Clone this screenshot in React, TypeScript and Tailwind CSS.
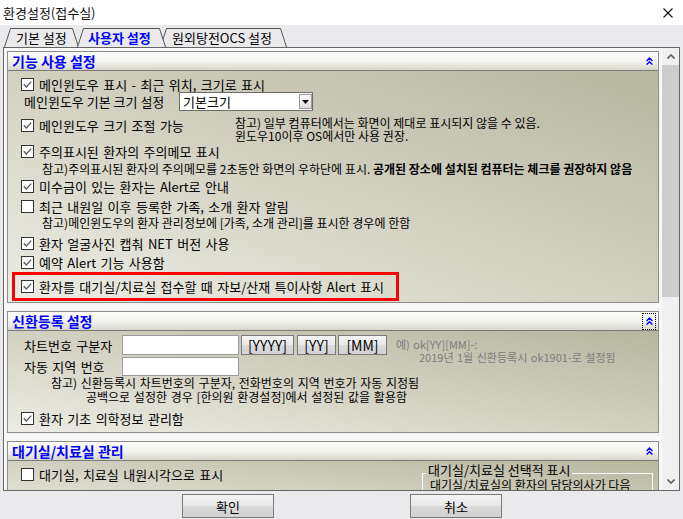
import React from "react";

function Check({ checked = true }: { checked?: boolean }) {
  return (
    <svg width="13" height="13" viewBox="0 0 13 13" className="shrink-0">
      <rect x="0.5" y="0.5" width="12" height="12" fill="#fff" stroke="#333" />
      {checked && (
        <path d="M2.8 6.3L5.3 9L10.2 3.6" fill="none" stroke="#5a5a5a" strokeWidth="1.3" />
      )}
    </svg>
  );
}

function Chev() {
  return (
    <svg width="7" height="8" viewBox="0 0 7 8">
      <path d="M0.6 4L3.5 1.1L6.4 4M0.6 7.6L3.5 4.7L6.4 7.6" fill="none" stroke="#0000ff" strokeWidth="1.4" />
    </svg>
  );
}

function Section({
  title,
  focus,
  bodyClass,
  children,
}: {
  title: string;
  focus?: boolean;
  bodyClass: string;
  children: React.ReactNode;
}) {
  return (
    <div className="w-[652px] shrink-0 border border-[#8c8c8c]">
      <div className="h-[19px] border-b border-[#7a7a7a] bg-[linear-gradient(to_bottom,#fcfcfa,#f2f2ed_55%,#d6d6ca)] flex items-center justify-between pl-[4px] pr-[2px]">
        <span className="text-[14px] font-bold text-[#0000ff] leading-none">{title}</span>
        <div
          className={
            focus
              ? "w-[14px] h-[17px] flex items-center justify-center border border-dotted border-black"
              : "w-[14px] h-[17px] flex items-center justify-center"
          }
        >
          <Chev />
        </div>
      </div>
      <div className={"bg-[linear-gradient(to_bottom_left,#b7b69e,#d2d1c1_50%,#ecece5)] " + bodyClass}>
        {children}
      </div>
    </div>
  );
}

function Row({ checked = true, children, cls = "" }: { checked?: boolean; children: React.ReactNode; cls?: string }) {
  return (
    <div className={"h-[16px] flex items-center pl-[13px] gap-[5px] " + cls}>
      <Check checked={checked} />
      <span className="leading-none whitespace-nowrap [word-spacing:1.5px]">{children}</span>
    </div>
  );
}

function Tab({
  w,
  cls,
  label,
  selected,
  pl,
}: {
  w: number;
  cls: string;
  label: string;
  selected?: boolean;
  pl: string;
}) {
  return (
    <div className={"relative h-[19px] shrink-0 " + cls}>
      <svg width={w} height="19" viewBox={`0 0 ${w} 19`} className="absolute left-0 top-0">
        <path
          d={`M0.5 19L6.5 0.5L${w - 6.5} 0.5L${w - 0.5} 19`}
          fill="#eaeaec"
          stroke="#555"
          strokeWidth="1"
        />
      </svg>
      <div
        className={
          "relative h-full flex items-center leading-none whitespace-nowrap text-[13px] " +
          pl +
          (selected ? " font-bold text-[#0000ff]" : " text-black")
        }
      >
        {label}
      </div>
    </div>
  );
}

function Btn({ children, cls }: { children: React.ReactNode; cls: string }) {
  return (
    <div
      className={
        "border border-[#7a7a7a] bg-[linear-gradient(to_bottom,#f4f4f4,#e8e8e8_50%,#dadada_52%,#d2d2d2)] flex items-center justify-center leading-none " +
        cls
      }
    >
      {children}
    </div>
  );
}

export default function App() {
  return (
    <div className="w-[683px] h-[519px] bg-[#eaeaec] flex flex-col overflow-hidden text-[13px] text-black font-['Noto_Sans_CJK_KR',sans-serif]">
      {/* title bar */}
      <div className="h-[25px] shrink-0 bg-white flex items-center justify-between pl-[3px] pr-[10px]">
        <span className="leading-none text-[13px] text-[#111]">환경설정(접수실)</span>
        <svg width="10" height="10" viewBox="0 0 10 10">
          <path d="M0.5 0.5L9.5 9.5M9.5 0.5L0.5 9.5" stroke="#111" strokeWidth="1.1" />
        </svg>
      </div>

      {/* tabs */}
      <div className="h-[22px] shrink-0 pt-[3px] pl-[4px] flex">
        <Tab w={75} cls="w-[75px] z-[1]" label="기본 설정" pl="pl-[12px]" />
        <Tab w={89} cls="w-[89px] ml-[-2px] z-[3]" label="사용자 설정" pl="pl-[11px]" selected />
        <Tab w={127} cls="w-[127px] ml-[-6px] z-[2]" label="원외탕전OCS 설정" pl="pl-[12px]" />
      </div>

      {/* frame */}
      <div className="mx-[3px] h-[444px] shrink-0 border border-[#666] flex">
        <div className="w-[659px] h-full overflow-hidden bg-[#f7f7f7] pl-[3px] pt-[3px] flex flex-col">
          {/* Section 1 */}
          <Section title="기능 사용 설정" bodyClass="h-[231px] flex flex-col pt-[5px]">
            <Row>메인윈도우 표시 - 최근 위치, 크기로 표시</Row>
            <div className="h-[19px] flex items-center pl-[16px]">
              <span className="w-[155px] leading-none whitespace-nowrap">메인윈도우 기본 크기 설정</span>
              <div className="w-[134px] h-[19px] bg-white border border-[#6d6d6d] flex items-center justify-between pl-[3px]">
                <span className="leading-none">기본크기</span>
                <div className="w-[13px] h-[15px] border border-[#9a9a9a] bg-[linear-gradient(to_bottom,#fafafa,#dcdcdc)] flex items-center justify-center">
                  <svg width="7" height="4" viewBox="0 0 7 4">
                    <path d="M0 0H7L3.5 4Z" fill="#000" />
                  </svg>
                </div>
              </div>
            </div>
            <div className="mt-[5px] h-[26px] flex items-start">
              <div className="w-[227px] h-[16px] mt-[1px] flex items-center pl-[13px] gap-[5px]">
                <Check />
                <span className="leading-none whitespace-nowrap [word-spacing:1.5px]">메인윈도우 크기 조절 가능</span>
              </div>
              <div className="text-[12px] leading-[13px] whitespace-nowrap">
                <div>참고) 일부 컴퓨터에서는 화면이 제대로 표시되지 않을 수 있음.</div>
                <div>윈도우10이후 OS에서만 사용 권장.</div>
              </div>
            </div>
            <Row cls="mt-[1px]">주의표시된 환자의 주의메모 표시</Row>
            <div className="mt-[2px] h-[15px] flex items-center pl-[34px] text-[12px] leading-none whitespace-nowrap">
              참고)주의표시된 환자의 주의메모를 2초동안 화면의 우하단에 표시.&nbsp;
              <b className="font-bold">공개된 장소에 설치된 컴퓨터는 체크를 권장하지 않음</b>
            </div>
            <Row cls="mt-[2px]">미수금이 있는 환자는 Alert로 안내</Row>
            <Row cls="mt-[4px]" checked={false}>
              최근 내원일 이후 등록한 가족, 소개 환자 알림
            </Row>
            <div className="mt-[2px] h-[14px] flex items-center pl-[34px] text-[12px] leading-none whitespace-nowrap">
              참고)메인윈도우의 환자 관리정보에 [가족, 소개 관리]를 표시한 경우에 한함
            </div>
            <Row cls="mt-[5px]">환자 얼굴사진 캡춰 NET 버전 사용</Row>
            <Row cls="mt-[3px]">예약 Alert 기능 사용함</Row>
            <div className="mt-[2px] ml-[4px] w-[387px] h-[29px] border-[3px] border-[#ff0000] flex items-center pl-[6px] gap-[5px]">
              <Check />
              <span className="leading-none whitespace-nowrap [word-spacing:1.5px]">
                환자를 대기실/치료실 접수할 때 자보/산재 특이사항 Alert 표시
              </span>
            </div>
          </Section>

          {/* Section 2 */}
          <div className="mt-[8px]">
            <Section title="신환등록 설정" focus bodyClass="h-[101px] flex flex-col pt-[4px]">
              <div className="h-[20px] flex items-start pl-[16px]">
                <span className="w-[98px] h-[20px] flex items-center leading-none whitespace-nowrap [word-spacing:1.5px]">
                  차트번호 구분자
                </span>
                <div className="w-[117px] h-[20px] bg-white border border-[#9a9a9a]" />
                <Btn cls="ml-[2px] w-[53px] h-[20px] text-[14px]">[YYYY]</Btn>
                <Btn cls="ml-[3px] w-[39px] h-[20px] text-[14px]">[YY]</Btn>
                <Btn cls="ml-[2px] w-[49px] h-[20px] text-[14px]">[MM]</Btn>
                <div className="ml-[9px] mt-[3px] text-[11px] leading-[13px] text-[#7c7c7c] whitespace-nowrap [word-spacing:1px]">
                  <div>예) ok[YY][MM]-:</div>
                  <div className="pl-[23px]">2019년 1월 신환등록시 ok1901-로 설정됨</div>
                </div>
              </div>
              <div className="mt-[2px] h-[19px] flex items-center pl-[16px]">
                <span className="w-[98px] leading-none whitespace-nowrap [word-spacing:1.5px]">자동 지역 번호</span>
                <div className="w-[117px] h-[19px] bg-white border border-[#9a9a9a]" />
              </div>
              <div className="text-[12px] leading-[14px] whitespace-nowrap [word-spacing:1px]">
                <div className="pl-[43px]">참고) 신환등록시 차트번호의 구분자, 전화번호의 지역 번호가 자동 지정됨</div>
                <div className="pl-[78px]">공백으로 설정한 경우 [한의원 환경설정]에서 설정된 값을 활용함</div>
              </div>
              <Row cls="mt-[6px]">환자 기초 의학정보 관리함</Row>
            </Section>
          </div>

          {/* Section 3 */}
          <div className="mt-[8px]">
            <Section title="대기실/치료실 관리" bodyClass="h-[60px] flex items-start pl-[13px]">
              <div className="w-[401px] h-[16px] mt-[5px] flex items-center gap-[5px]">
                <Check checked={false} />
                <span className="leading-none whitespace-nowrap [word-spacing:1.5px]">대기실, 치료실 내원시각으로 표시</span>
              </div>
              <fieldset className="mt-[2px] w-[231px] h-[50px] border border-white pl-[7px]">
                <legend className="ml-[-4px] px-[2px] pb-[6px] leading-[14px] whitespace-nowrap">
                  대기실/치료실 선택적 표시
                </legend>
                <div className="mt-[-4px] leading-[12px] text-[12px] whitespace-nowrap">
                  대기실/치료실의 환자의 담당의사가 다음
                </div>
              </fieldset>
            </Section>
          </div>
        </div>

        {/* scrollbar */}
        <div className="w-[17px] h-full bg-[#f0f0f0] flex flex-col">
          <div className="h-[17px] flex items-center justify-center">
            <svg width="8" height="5" viewBox="0 0 8 5">
              <path d="M0.5 4.5L4 1L7.5 4.5" fill="none" stroke="#606060" strokeWidth="1.6" />
            </svg>
          </div>
          <div className="h-[232px] bg-[#cdcdcd]" />
          <div className="flex-1" />
          <div className="h-[17px] flex items-center justify-center">
            <svg width="8" height="5" viewBox="0 0 8 5">
              <path d="M0.5 0.5L4 4L7.5 0.5" fill="none" stroke="#606060" strokeWidth="1.6" />
            </svg>
          </div>
        </div>
      </div>

      {/* buttons */}
      <div className="pt-[3px] flex pl-[182px]">
        <Btn cls="w-[92px] h-[24px]">확인</Btn>
        <Btn cls="ml-[136px] w-[92px] h-[24px]">취소</Btn>
      </div>
    </div>
  );
}
